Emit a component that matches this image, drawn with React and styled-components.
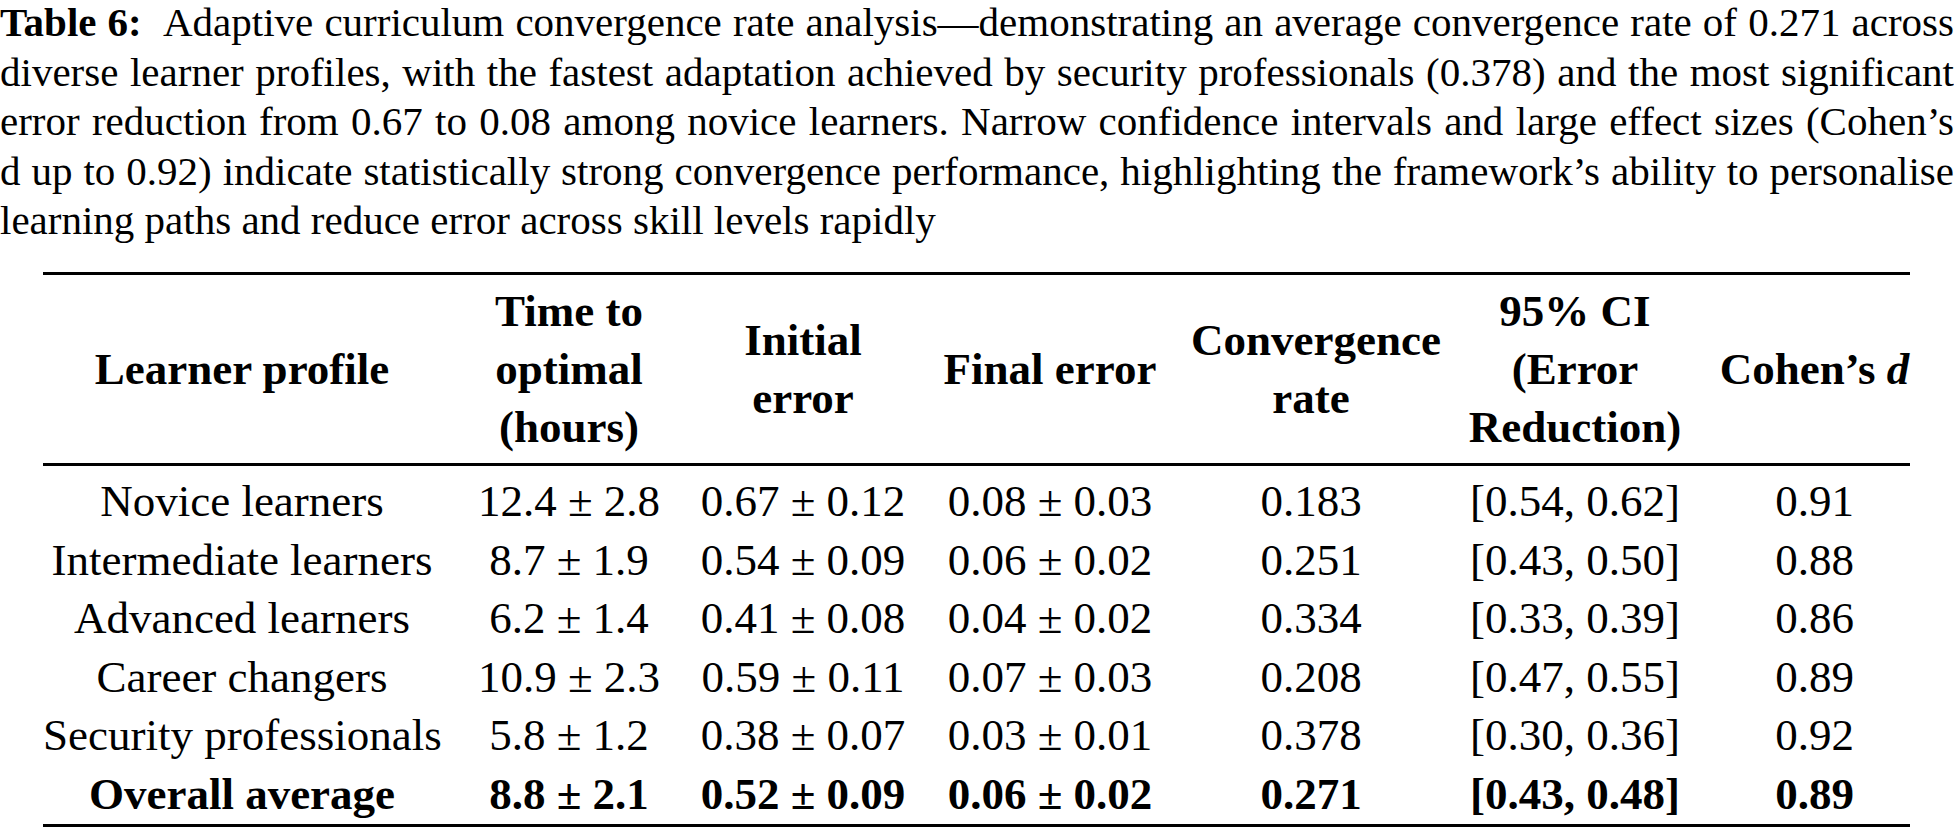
import React from "react";
import styled, { createGlobalStyle } from "styled-components";

const Global = createGlobalStyle`
  html, body {
    margin: 0;
    padding: 0;
    background: #ffffff;
    overflow: hidden;
  }
  body {
    font-family: "Liberation Serif", "Times New Roman", serif;
    color: #000000;
  }
`;

const Page = styled.div`
  width: 1954px;
  height: 829px;
  display: flex;
  flex-direction: column;
`;

const Caption = styled.div`
  margin-top: -2px;
  font-size: 41px;
  line-height: 49.5px;
`;

const CaptionLine = styled.span`
  display: block;
  text-align: ${(p) => (p.$last ? "left" : "justify")};
  text-align-last: ${(p) => (p.$last ? "left" : "justify")};
`;

const Label = styled.b`
  font-weight: 700;
  margin-right: 0.3em;
`;

const Table = styled.table`
  margin: 26.5px 0 0 43px;
  width: 1867px;
  table-layout: fixed;
  border-collapse: collapse;
  font-size: 45px;
  line-height: 58.5px;
  border-top: 3px solid #000;
  border-bottom: 3px solid #000;
`;

const Col = styled.col`
  width: ${(p) => p.$w}px;
`;

const HeadRow = styled.tr`
  border-bottom: 3px solid #000;
`;

const HeadCell = styled.th`
  font-weight: 700;
  text-align: center;
  vertical-align: middle;
  padding: 7px 0;
  line-height: 58px;
  white-space: nowrap;
`;

const Italic = styled.i`
  font-style: italic;
`;

const BodyRow = styled.tr`
  font-weight: ${(p) => (p.$bold ? 700 : 400)};
  & > td {
    padding-top: ${(p) => (p.$first ? 6 : 0)}px;
    padding-bottom: ${(p) => (p.$lastRow ? 1 : 0)}px;
  }
`;

const Cell = styled.td`
  text-align: center;
  padding: 0;
  white-space: nowrap;
`;

const widths = [398, 256, 212, 282, 240, 288, 191];

const rows = [
  ["Novice learners", "12.4 ± 2.8", "0.67 ± 0.12", "0.08 ± 0.03", "0.183", "[0.54, 0.62]", "0.91"],
  ["Intermediate learners", "8.7 ± 1.9", "0.54 ± 0.09", "0.06 ± 0.02", "0.251", "[0.43, 0.50]", "0.88"],
  ["Advanced learners", "6.2 ± 1.4", "0.41 ± 0.08", "0.04 ± 0.02", "0.334", "[0.33, 0.39]", "0.86"],
  ["Career changers", "10.9 ± 2.3", "0.59 ± 0.11", "0.07 ± 0.03", "0.208", "[0.47, 0.55]", "0.89"],
  ["Security professionals", "5.8 ± 1.2", "0.38 ± 0.07", "0.03 ± 0.01", "0.378", "[0.30, 0.36]", "0.92"],
  ["Overall average", "8.8 ± 2.1", "0.52 ± 0.09", "0.06 ± 0.02", "0.271", "[0.43, 0.48]", "0.89"],
];

export default function App() {
  return (
    <>
      <Global />
      <Page>
        <Caption>
          <CaptionLine>
            <Label>Table 6:</Label> Adaptive curriculum convergence rate analysis—demonstrating an average convergence rate of 0.271 across
          </CaptionLine>
          <CaptionLine>
            diverse learner profiles, with the fastest adaptation achieved by security professionals (0.378) and the most significant
          </CaptionLine>
          <CaptionLine>
            error reduction from 0.67 to 0.08 among novice learners. Narrow confidence intervals and large effect sizes (Cohen’s
          </CaptionLine>
          <CaptionLine>
            d up to 0.92) indicate statistically strong convergence performance, highlighting the framework’s ability to personalise
          </CaptionLine>
          <CaptionLine $last>
            learning paths and reduce error across skill levels rapidly
          </CaptionLine>
        </Caption>
        <Table>
          <colgroup>
            {widths.map((w, i) => (
              <Col key={i} $w={w} />
            ))}
          </colgroup>
          <thead>
            <HeadRow>
              <HeadCell>Learner profile</HeadCell>
              <HeadCell>
                Time to
                <br />
                optimal
                <br />
                (hours)
              </HeadCell>
              <HeadCell>
                Initial
                <br />
                error
              </HeadCell>
              <HeadCell>Final error</HeadCell>
              <HeadCell>
                Convergence
                <br />
                rate
              </HeadCell>
              <HeadCell>
                95% CI
                <br />
                (Error
                <br />
                Reduction)
              </HeadCell>
              <HeadCell>
                Cohen’s <Italic>d</Italic>
              </HeadCell>
            </HeadRow>
          </thead>
          <tbody>
            {rows.map((r, i) => (
              <BodyRow
                key={r[0]}
                $bold={i === rows.length - 1}
                $first={i === 0}
                $lastRow={i === rows.length - 1}
              >
                {r.map((c, j) => (
                  <Cell key={j}>{c}</Cell>
                ))}
              </BodyRow>
            ))}
          </tbody>
        </Table>
      </Page>
    </>
  );
}
